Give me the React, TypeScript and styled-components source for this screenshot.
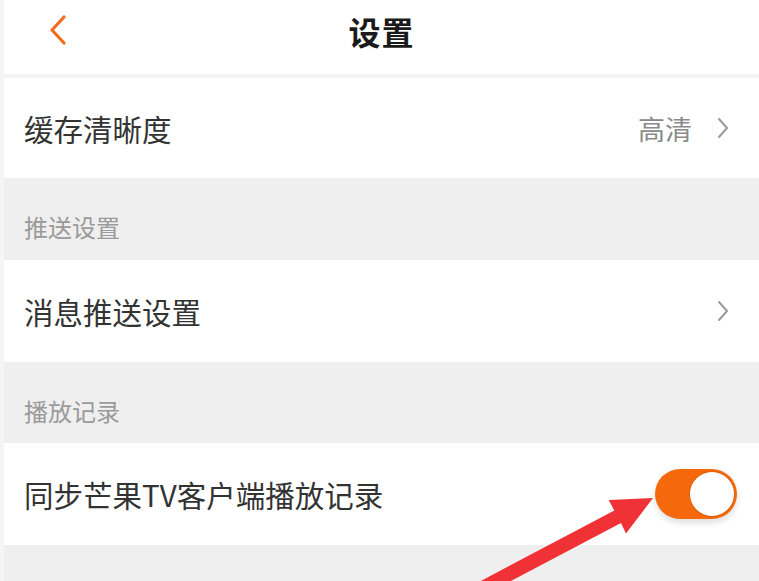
import React, { useState } from "react";
import styled, { createGlobalStyle } from "styled-components";

const GlobalStyle = createGlobalStyle`
  html, body {
    margin: 0;
    padding: 0;
    background: #efefef;
  }
  body {
    font-family: "Noto Sans CJK SC", "Noto Sans", sans-serif;
    color: #333;
  }
`;

const Page = styled.div`
  position: relative;
  width: 759px;
  height: 581px;
  overflow: hidden;
  background: #efefef;
  border-left: 4px solid #f4f5f9;
  box-sizing: border-box;
`;

const Header = styled.header`
  position: relative;
  height: 74px;
  display: flex;
  align-items: center;
  justify-content: center;
  background: #fff;
  border-bottom: 4px solid #f3f3f3;
`;

const BackButton = styled.button`
  position: absolute;
  left: 39px;
  top: 14px;
  width: 30px;
  height: 32px;
  padding: 0;
  border: none;
  background: transparent;
  display: flex;
  align-items: center;
  justify-content: center;
`;

const Title = styled.h1`
  margin: 0 0 12px;
  font-size: 32px;
  font-weight: 700;
  color: #1a1a1a;
  letter-spacing: 1px;
`;

const Row = styled.div<{ $height: number }>`
  height: ${(p) => p.$height}px;
  display: flex;
  align-items: center;
  justify-content: space-between;
  padding: 0 30px 0 20px;
  background: #fff;
`;

const RowLabel = styled.span`
  font-size: 29.5px;
  color: #333;
`;

const RowRight = styled.div`
  display: flex;
  align-items: center;
  gap: 25px;
`;

const RowValue = styled.span`
  font-size: 27px;
  color: #8a8a8a;
`;

const SectionTitle = styled.div<{ $height: number }>`
  height: ${(p) => p.$height}px;
  box-sizing: border-box;
  padding: 34px 0 0 20px;
  font-size: 24px;
  line-height: 30px;
  color: #9a9a9a;
`;

const Toggle = styled.button<{ $on: boolean }>`
  position: relative;
  width: 82px;
  height: 50px;
  padding: 0;
  margin-right: -8px;
  border: none;
  border-radius: 25px;
  background: ${(p) => (p.$on ? "#f5690c" : "#ddd")};
  box-shadow: 0 4px 6px rgba(0, 0, 0, 0.12);
  display: flex;
  align-items: center;
  justify-content: ${(p) => (p.$on ? "flex-end" : "flex-start")};
  cursor: pointer;
`;

const Knob = styled.span`
  width: 44px;
  height: 44px;
  margin: 0 3px;
  border-radius: 50%;
  background: #fff;
  box-shadow: 0 0 0 1px rgba(200, 90, 20, 0.5);
`;

const Arrow = styled.svg`
  position: absolute;
  left: 0;
  top: 0;
  pointer-events: none;
`;

const Chevron = () => (
  <svg width="12" height="22" viewBox="0 0 12 22">
    <path d="M2 2 L10 11 L2 20" fill="none" stroke="#9a9a9a" strokeWidth="2" strokeLinecap="round" strokeLinejoin="round" />
  </svg>
);

export default function App() {
  const [sync, setSync] = useState(true);

  return (
    <>
      <GlobalStyle />
      <Page>
        <Header>
          <BackButton aria-label="返回">
            <svg width="20" height="30" viewBox="0 0 20 30">
              <path d="M16 2 L4 15 L16 28" fill="none" stroke="#f26b1d" strokeWidth="3.2" strokeLinecap="round" strokeLinejoin="round" />
            </svg>
          </BackButton>
          <Title>设置</Title>
        </Header>

        <Row $height={100}>
          <RowLabel>缓存清晰度</RowLabel>
          <RowRight>
            <RowValue>高清</RowValue>
            <Chevron />
          </RowRight>
        </Row>

        <SectionTitle $height={82}>推送设置</SectionTitle>
        <Row $height={102}>
          <RowLabel>消息推送设置</RowLabel>
          <RowRight>
            <Chevron />
          </RowRight>
        </Row>

        <SectionTitle $height={81}>播放记录</SectionTitle>
        <Row $height={102}>
          <RowLabel>同步芒果TV客户端播放记录</RowLabel>
          <Toggle $on={sync} onClick={() => setSync(!sync)} aria-label="同步播放记录">
            <Knob />
          </Toggle>
        </Row>

        <Arrow width="759" height="581" viewBox="0 0 759 581">
          <polygon
            points="649,498 622,533.5 617,522.9 457.8,606.9 451.2,594.5 610.3,510.5 604.7,499.9"
            fill="#f03236"
          />
        </Arrow>
      </Page>
    </>
  );
}
